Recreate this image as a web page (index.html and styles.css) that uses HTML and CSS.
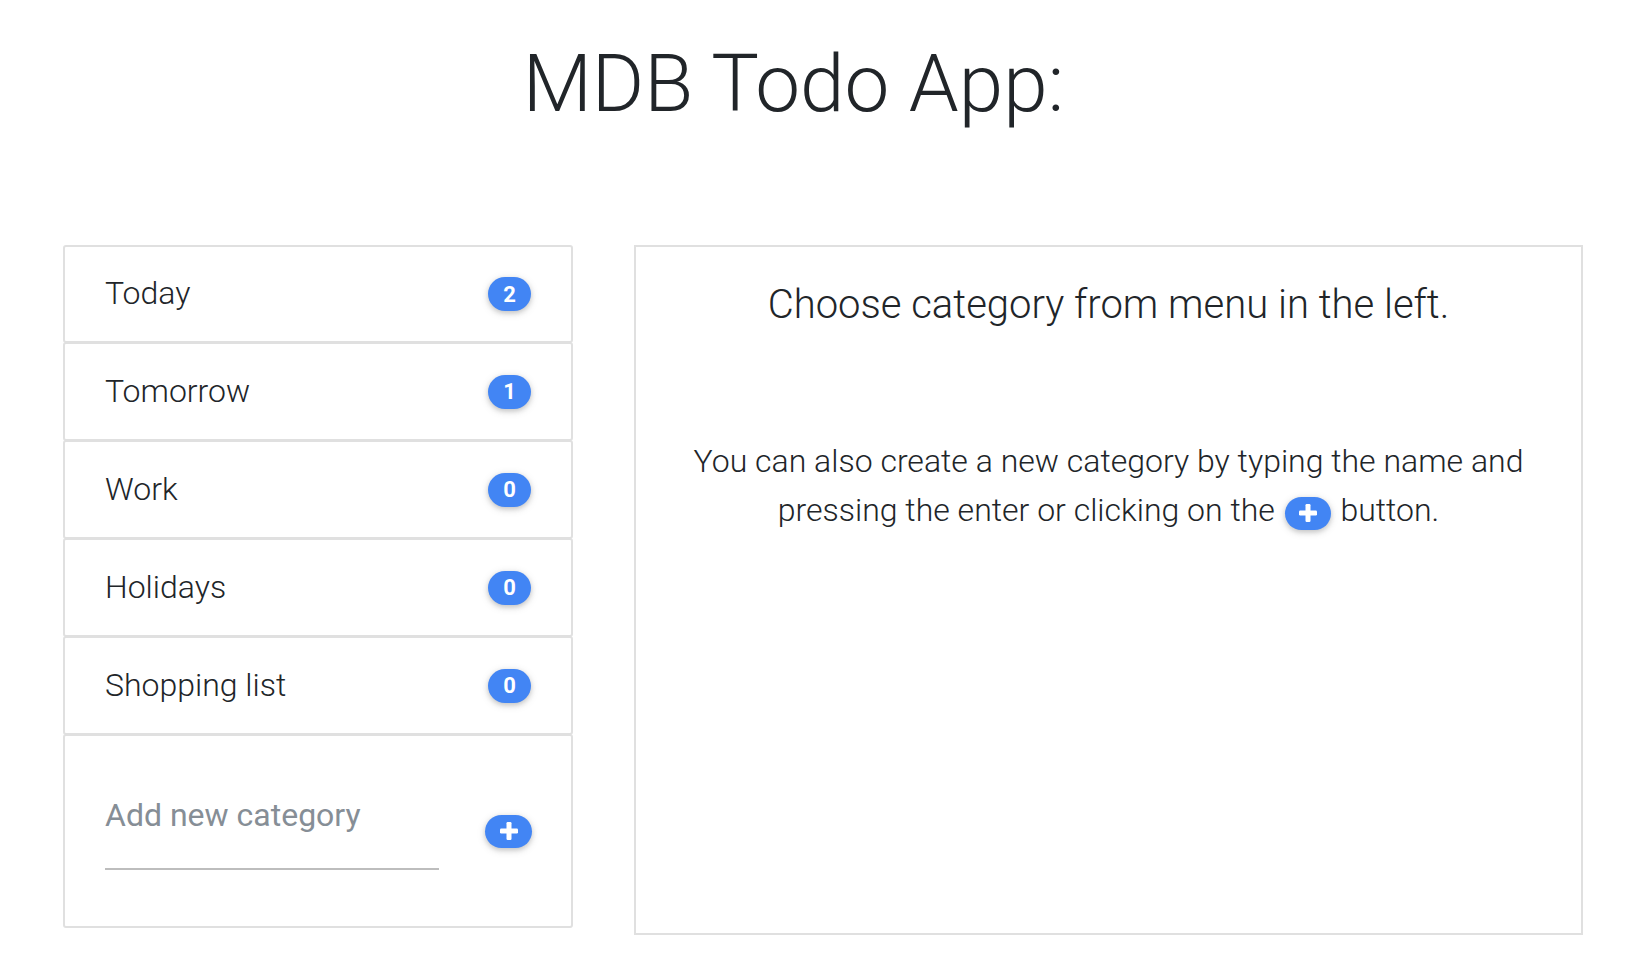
FILE: index.html
```html
<!DOCTYPE html>
<html lang="en">
<head>
<meta charset="utf-8">
<title>MDB Todo App</title>
<link rel="stylesheet" href="styles.css">
</head>
<body>
<h1 class="title">MDB Todo App:</h1>
<div class="layout">
  <div class="sidebar">
    <div class="cat"><span class="cat-name">Today</span><span class="badge">2</span></div>
    <div class="cat"><span class="cat-name">Tomorrow</span><span class="badge">1</span></div>
    <div class="cat"><span class="cat-name">Work</span><span class="badge">0</span></div>
    <div class="cat"><span class="cat-name">Holidays</span><span class="badge">0</span></div>
    <div class="cat"><span class="cat-name">Shopping list</span><span class="badge">0</span></div>
    <div class="cat add">
      <div class="field"><span class="placeholder">Add new category</span></div>
      <span class="plus-btn"><svg class="plus" viewBox="0 0 18 18" width="18" height="18"><rect x="6.5" y="0" width="5" height="18" rx="1.2" fill="#fff"/><rect x="0" y="6.5" width="18" height="5" rx="1.2" fill="#fff"/></svg></span>
    </div>
  </div>
  <div class="panel">
    <h3 class="panel-title">Choose category from menu in the left.</h3>
    <p class="panel-text">You can also create a new category by typing the name and pressing the enter or clicking on the <span class="plus-btn inline"><svg class="plus" viewBox="0 0 18 18" width="18" height="18"><rect x="6.5" y="0" width="5" height="18" rx="1.2" fill="#fff"/><rect x="0" y="6.5" width="18" height="5" rx="1.2" fill="#fff"/></svg></span> button.</p>
  </div>
</div>
</body>
</html>
```
FILE: styles.css
```css
* { box-sizing: border-box; }
html, body { margin: 0; padding: 0; background: #fff; }
body {
  font-family: Roboto, "Liberation Sans", sans-serif;
  color: #212529;
  width: 1636px;
  height: 958px;
  overflow: hidden;
}
.title {
  margin: 0;
  padding: 36px 49px 0 0;
  text-align: center;
  font-size: 80px;
  font-weight: 300;
  line-height: 1.2;
  height: 131px;
}
.layout {
  display: flex;
  align-items: flex-start;
  gap: 61px;
  padding: 114px 0 0 63px;
}
.sidebar {
  width: 510px;
  display: flex;
  flex-direction: column;
}
.cat {
  height: 99px;
  margin-top: -1px;
  border: 2px solid #e0e0e0;
  border-radius: 3px;
  display: flex;
  align-items: center;
  justify-content: space-between;
  padding: 0 40px 0 40px;
}
.cat:first-child { margin-top: 0; height: 98px; }
.cat-name {
  font-size: 32px;
  font-weight: 300;
  line-height: 1;
  margin-top: -2px;
}
.badge {
  width: 43px;
  height: 34px;
  border-radius: 17px;
  background: #4285f4;
  color: #fff;
  font-weight: 700;
  font-size: 22px;
  display: flex;
  align-items: center;
  justify-content: center;
  box-shadow: 0 2px 5px rgba(0,0,0,.16), 0 2px 10px rgba(0,0,0,.12);
}
.cat.add {
  height: 194px;
  padding-right: 39px;
}
.field {
  width: 334px;
  padding: 3px 0 33px;
  border-bottom: 2px solid #bdbdbd;
}
.placeholder {
  display: block;
  font-size: 32px;
  line-height: 40px;
  color: #868e96;
  font-weight: 400;
}
.plus-btn {
  width: 47px;
  height: 33px;
  border-radius: 17px;
  background: #4285f4;
  display: inline-flex;
  align-items: center;
  justify-content: center;
  box-shadow: 0 2px 5px rgba(0,0,0,.16), 0 2px 10px rgba(0,0,0,.12);
}
.plus { display: block; }
.plus-btn.inline {
  width: 46px;
  vertical-align: -1px;
  margin: 0 2px;
}
.panel {
  width: 949px;
  height: 690px;
  border: 2px solid #e0e0e0;
  padding: 34px 40px 0;
  text-align: center;
}
.panel-title {
  margin: 0;
  font-size: 40px;
  font-weight: 300;
  line-height: 1.2;
}
.panel-text {
  margin: 108px 0 0;
  font-size: 32px;
  font-weight: 300;
  line-height: 49px;
}
```
